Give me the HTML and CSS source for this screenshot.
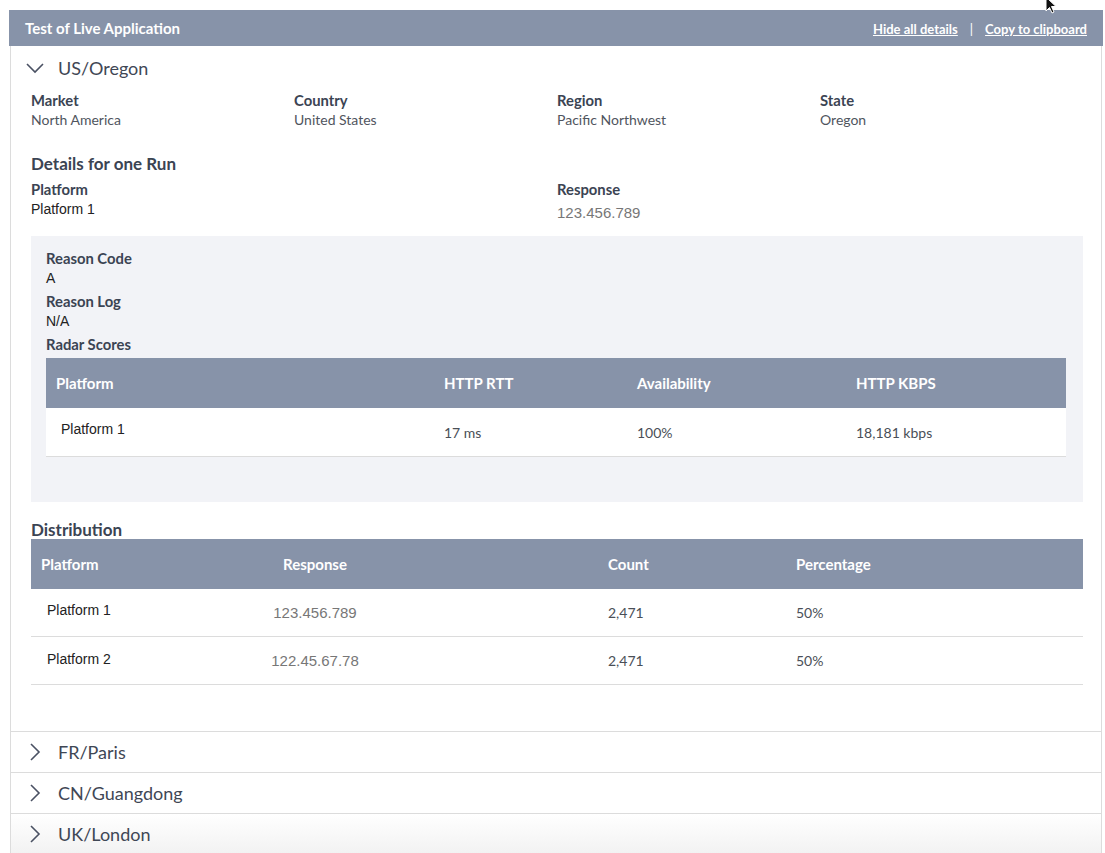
FILE: index.html
```html
<!DOCTYPE html>
<html>
<head>
<meta charset="utf-8">
<link rel="stylesheet" href="styles.css">
</head>
<body>
<div class="page">
  <div class="titlebar">
    <span class="title">Test of Live Application</span>
    <span class="links"><a class="link">Hide all details</a><span class="sep">|</span><a class="link">Copy to clipboard</a></span>
  </div>
  <div class="panel">
    <div class="item open">
      <div class="item-head">
        <svg class="chev-down" width="18" height="12" viewBox="0 0 18 12"><path d="M1 2 L9 10 L17 2" fill="none" stroke="#4a5163" stroke-width="1.6"/></svg>
        <span class="item-title">US/Oregon</span>
      </div>
      <div class="item-body">
        <div class="info-grid">
          <div class="field"><div class="label">Market</div><div class="value">North America</div></div>
          <div class="field"><div class="label">Country</div><div class="value">United States</div></div>
          <div class="field"><div class="label">Region</div><div class="value">Pacific Northwest</div></div>
          <div class="field"><div class="label">State</div><div class="value">Oregon</div></div>
        </div>
        <h3 class="section-title">Details for one Run</h3>
        <div class="run-grid">
          <div class="field"><div class="label">Platform</div><div class="value arial dark">Platform 1</div></div>
          <div class="field"><div class="label">Response</div><div class="value arial grey big low">123.456.789</div></div>
        </div>
        <div class="graybox">
          <div class="label">Reason Code</div>
          <div class="value arial dark gap">A</div>
          <div class="label">Reason Log</div>
          <div class="value arial dark gap">N/A</div>
          <div class="label">Radar Scores</div>
          <table class="tbl radar">
            <thead>
              <tr><th class="c1">Platform</th><th class="c2">HTTP RTT</th><th class="c3">Availability</th><th class="c4">HTTP KBPS</th></tr>
            </thead>
            <tbody>
              <tr><td class="c1 arial dark first">Platform 1</td><td>17 ms</td><td>100%</td><td>18,181 kbps</td></tr>
            </tbody>
          </table>
        </div>
        <h3 class="section-title dist-title">Distribution</h3>
        <table class="tbl dist">
          <thead>
            <tr><th class="d1">Platform</th><th class="d2">Response</th><th class="d3">Count</th><th class="d4">Percentage</th></tr>
          </thead>
          <tbody>
            <tr><td class="d1 arial dark">Platform 1</td><td class="d2 arial grey">123.456.789</td><td class="d3">2,471</td><td class="d4">50%</td></tr>
            <tr><td class="d1 arial dark">Platform 2</td><td class="d2 arial grey">122.45.67.78</td><td class="d3">2,471</td><td class="d4">50%</td></tr>
          </tbody>
        </table>
      </div>
    </div>
    <div class="item">
      <div class="item-head closed">
        <svg class="chev-right" width="12" height="18" viewBox="0 0 12 18"><path d="M2 1 L10 9 L2 17" fill="none" stroke="#4a5163" stroke-width="1.6"/></svg>
        <span class="item-title">FR/Paris</span>
      </div>
    </div>
    <div class="item">
      <div class="item-head closed">
        <svg class="chev-right" width="12" height="18" viewBox="0 0 12 18"><path d="M2 1 L10 9 L2 17" fill="none" stroke="#4a5163" stroke-width="1.6"/></svg>
        <span class="item-title">CN/Guangdong</span>
      </div>
    </div>
    <div class="item last">
      <div class="item-head closed">
        <svg class="chev-right" width="12" height="18" viewBox="0 0 12 18"><path d="M2 1 L10 9 L2 17" fill="none" stroke="#4a5163" stroke-width="1.6"/></svg>
        <span class="item-title">UK/London</span>
      </div>
    </div>
  </div>
  <svg class="cursor" width="14" height="20" viewBox="0 0 14 20"><path d="M1 1 L1 15 L4.5 11.5 L7 17 L9 16 L6.5 10.5 L11 10.5 Z" fill="#111" stroke="#fff" stroke-width="1"/></svg>
</div>
</body>
</html>
```

FILE: styles.css
```css
html, body {
  margin: 0;
  padding: 0;
  background: #fff;
}
body {
  font-family: Lato, "Open Sans", sans-serif;
  color: #3b4453;
}
.page {
  position: relative;
  padding: 10px 2px 0 9px;
  height: 843px;
  overflow: hidden;
}
.titlebar {
  height: 36px;
  background: #8793a9;
  display: flex;
  align-items: center;
  justify-content: space-between;
  padding: 0 16px 0 16px;
  color: #fff;
}
.title {
  font-weight: 700;
  font-size: 15px;
}
.links {
  font-size: 13px;
  font-weight: 700;
  padding-top: 2px;
}
.link {
  text-decoration: underline;
  color: #fff;
}
.sep {
  margin: 0 12px 0 12px;
  font-weight: 400;
}
.panel {
  margin: 0 1px;
  border-left: 1px solid #dcdcdc;
  border-right: 1px solid #dcdcdc;
}
.item {
  border-bottom: 1px solid #dcdcdc;
}
.item-head {
  height: 43px;
  display: flex;
  align-items: center;
  padding-left: 15px;
}
.item-head.closed {
  height: 40px;
  padding-left: 18px;
}
.chev-down {
  margin-right: 14px;
  margin-top: 1px;
}
.chev-right {
  margin-right: 17px;
}
.item-title {
  font-size: 18px;
  color: #3f4755;
}
.item.last {
  background: linear-gradient(#ffffff, #f2f2f2);
}
.item-body {
  padding: 1px 18px 46px 20px;
}
.info-grid {
  display: grid;
  grid-template-columns: repeat(4, 1fr);
}
.run-grid {
  display: grid;
  grid-template-columns: repeat(2, 1fr);
}
.label {
  font-size: 14.8px;
  font-weight: 700;
  line-height: 20px;
  color: #3b4453;
}
.value {
  font-size: 14px;
  line-height: 19px;
  color: #50555e;
}
.run-grid .value {
  line-height: 21px;
}
.arial {
  font-family: "Liberation Sans", Arial, sans-serif;
}
.dark {
  color: #222;
}
.grey {
  color: #777;
}
.big {
  font-size: 15px;
}
.low {
  padding-top: 3px;
}
.graybox .value {
  line-height: 20px;
}
.gap {
  margin-bottom: 3px;
}
.section-title {
  margin: 25px 0 5px;
  font-size: 17px;
  line-height: 20px;
  font-weight: 700;
  color: #3b4453;
}
.graybox {
  margin-top: 13px;
  background: #f2f3f7;
  padding: 12px 17px 45px 15px;
}
.tbl {
  width: 100%;
  border-collapse: collapse;
  font-size: 14px;
  table-layout: fixed;
}
.tbl th {
  background: #8793a9;
  color: #fff;
  font-weight: 700;
  font-size: 15px;
  text-align: left;
  height: 50px;
  padding: 0 10px;
  box-sizing: border-box;
}
.tbl td {
  background: #fff;
  height: 48px;
  padding: 0 10px;
  border-bottom: 1px solid #dcdcdc;
  color: #4a4f57;
  box-sizing: border-box;
}
.radar {
  margin-top: 4px;
}
.radar .c1 { width: 388px; }
.radar .c2 { width: 193px; }
.radar .c3 { width: 219px; }
.radar td.first {
  padding-left: 15px;
  padding-bottom: 7px;
  color: #222;
}
.radar td { padding-top: 2px; }
.dist-title {
  margin: 18px 0 0;
  line-height: 19px;
}
.dist .d1 { width: 100px; }
.dist .d2 { width: 368px; text-align: center; }
.dist .d3 { width: 287px; padding-left: 109px; }
.dist td.d1 { padding-left: 16px; padding-bottom: 4px; color: #222; }
.dist td.d2 { color: #777; font-size: 15px; }
.cursor {
  position: absolute;
  left: 1045px;
  top: -4px;
}
```
